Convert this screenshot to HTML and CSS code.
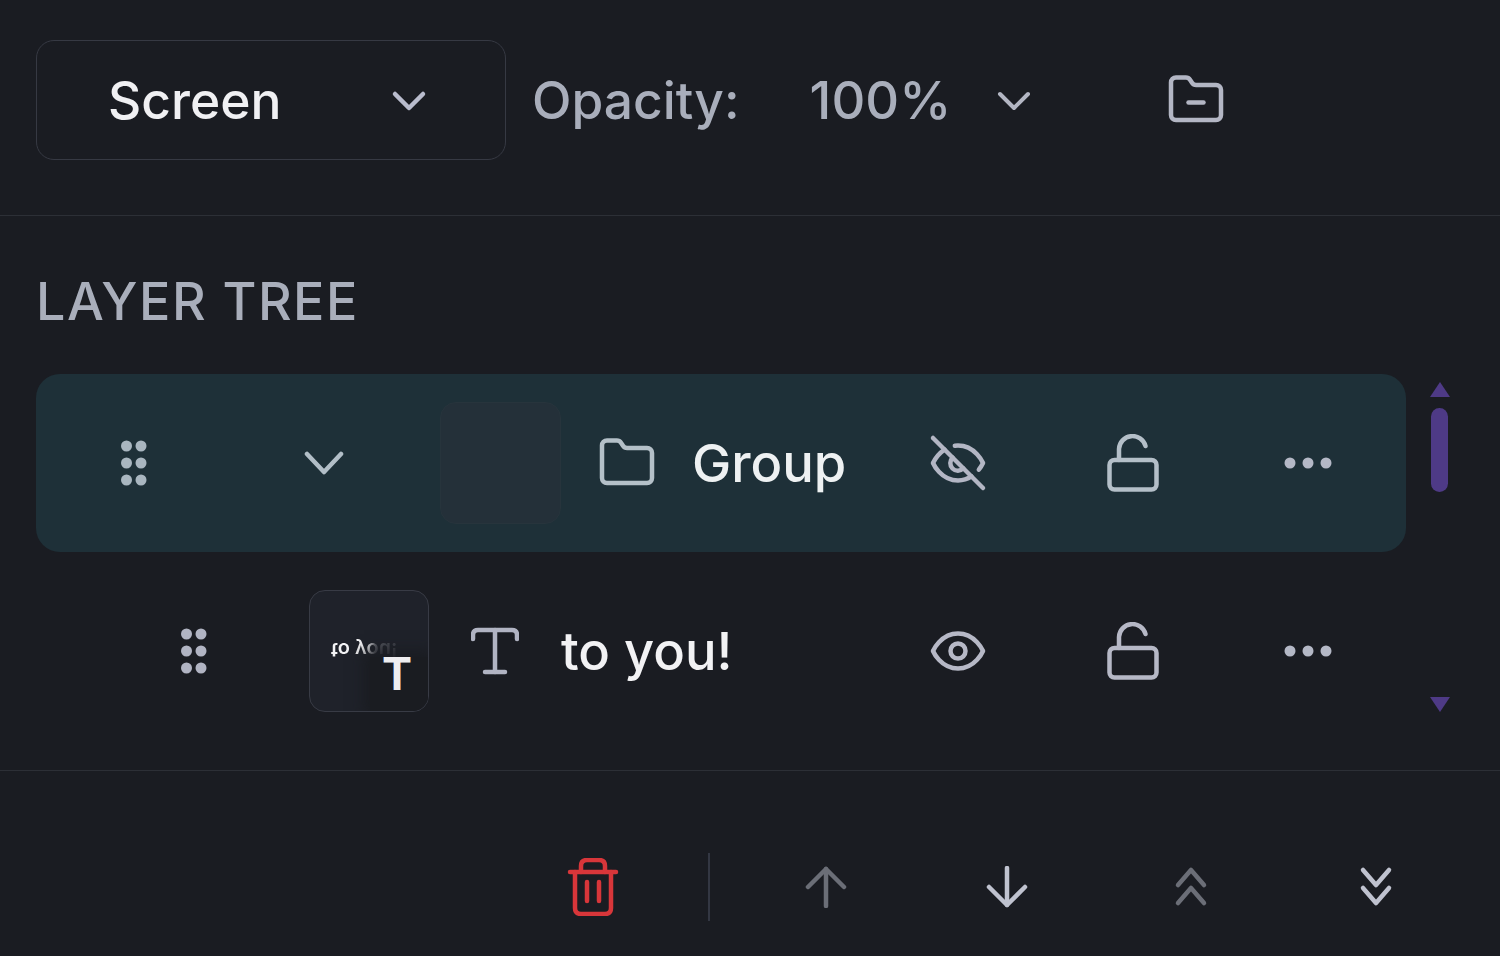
FILE: index.html
```html
<!DOCTYPE html>
<html lang="en">
<head>
<meta charset="utf-8">
<title>Layer tree</title>
<link rel="stylesheet" href="styles.css">
</head>
<body>
<main class="panel">
  <section class="toolbar">
    <div class="select">
      <span class="select-label">Screen</span>
      <svg class="chev" viewBox="0 0 36 24"><path d="M4 6l14 14L32 6"/></svg>
    </div>
    <span class="opacity-label">Opacity:</span>
    <span class="opacity-value">100%</span>
    <svg class="chev chev-opacity" viewBox="0 0 36 24"><path d="M4 6l14 14L32 6"/></svg>
    <svg class="icon icon-group-folder" viewBox="0 0 24 24"><path d="M9 13h6"/><path d="M20 20a2 2 0 0 0 2-2V8a2 2 0 0 0-2-2h-7.9a2 2 0 0 1-1.69-.9L9.6 3.9A2 2 0 0 0 7.93 3H4a2 2 0 0 0-2 2v13a2 2 0 0 0 2 2Z"/></svg>
  </section>

  <h2 class="title">LAYER TREE</h2>

  <section class="tree">
    <div class="list">
      <div class="row row-selected">
        <svg class="grip grip-group" viewBox="0 0 28 48"><circle cx="6.500" cy="7" r="5.500"/><circle cx="21" cy="7" r="5.500"/><circle cx="6.500" cy="24" r="5.500"/><circle cx="21" cy="24" r="5.500"/><circle cx="6.500" cy="41" r="5.500"/><circle cx="21" cy="41" r="5.500"/></svg>
        <svg class="row-chev" viewBox="0 0 40 26"><path d="M3 4l17 18L37 4"/></svg>
        <div class="thumb thumb-empty"></div>
        <svg class="icon folder" viewBox="0 0 24 24"><path d="M20 20a2 2 0 0 0 2-2V8a2 2 0 0 0-2-2h-7.900a2 2 0 0 1-1.690-.9L9.600 3.900A2 2 0 0 0 7.930 3H4a2 2 0 0 0-2 2v13a2 2 0 0 0 2 2Z"/></svg>
        <span class="name name-group">Group</span>
        <div class="actions">
          <span class="cell"><svg class="icon" viewBox="0 0 24 24"><path d="M9.880 9.880a3 3 0 1 0 4.240 4.240"/><path d="M10.730 5.080A10.430 10.430 0 0 1 12 5c7 0 10 7 10 7a13.160 13.160 0 0 1-1.670 2.680"/><path d="M6.610 6.610A13.526 13.526 0 0 0 2 12s3 7 10 7a9.740 9.740 0 0 0 5.390-1.610"/><path d="M2 2l20 20"/></svg></span>
          <span class="cell"><svg class="lock" viewBox="0 0 52 58"><rect x="2.500" y="26" width="47" height="29.500" rx="5"/><path d="M12 26V15a13.500 13.500 0 0 1 26.500-3"/></svg></span>
          <span class="cell"><svg class="more" viewBox="0 0 48 12"><circle cx="6" cy="6" r="5.500"/><circle cx="24" cy="6" r="5.500"/><circle cx="42" cy="6" r="5.500"/></svg></span>
        </div>
      </div>
      <div class="row row-text">
        <svg class="grip grip-text" viewBox="0 0 28 48"><circle cx="6.500" cy="7" r="5.500"/><circle cx="21" cy="7" r="5.500"/><circle cx="6.500" cy="24" r="5.500"/><circle cx="21" cy="24" r="5.500"/><circle cx="6.500" cy="41" r="5.500"/><circle cx="21" cy="41" r="5.500"/></svg>
        <div class="thumb thumb-text">
          <span class="thumb-preview">to you!</span>
          <span class="thumb-badge">T</span>
        </div>
        <svg class="type-icon" viewBox="0 0 48 48"><path d="M2 12V8q0-5 5-5h34q5 0 5 5v4"/><path d="M24 3v42"/><path d="M14 45h20"/></svg>
        <span class="name name-text">to you!</span>
        <div class="actions">
          <span class="cell"><svg class="icon" viewBox="0 0 24 24"><path d="M2 12s3-7 10-7 10 7 10 7-3 7-10 7-10-7-10-7Z"/><circle cx="12" cy="12" r="3"/></svg></span>
          <span class="cell"><svg class="lock" viewBox="0 0 52 58"><rect x="2.500" y="26" width="47" height="29.500" rx="5"/><path d="M12 26V15a13.500 13.500 0 0 1 26.500-3"/></svg></span>
          <span class="cell"><svg class="more" viewBox="0 0 48 12"><circle cx="6" cy="6" r="5.500"/><circle cx="24" cy="6" r="5.500"/><circle cx="42" cy="6" r="5.500"/></svg></span>
        </div>
      </div>
    </div>
    <div class="scrollbar">
      <span class="tri tri-up"></span>
      <span class="scroll-thumb"></span>
      <span class="tri tri-down"></span>
    </div>
  </section>

  <section class="footer">
    <svg class="trash" viewBox="0 0 52 58"><path d="M3 14h46"/><path d="M14 14V8q0-6 6-6h12q6 0 6 6v6"/><path d="M8 14v36q0 6 6 6h24q6 0 6-6V14"/><path d="M20 24v19"/><path d="M32 24v19"/></svg>
    <span class="vline"></span>
    <svg class="arrow dim arrow-up" viewBox="0 0 44 42"><path d="M22 40V3"/><path d="M4 21L22 3l18 18"/></svg>
    <svg class="arrow arrow-down" viewBox="0 0 44 42"><path d="M22 2v37"/><path d="M4 21l18 18 18-18"/></svg>
    <svg class="arrow dim arrow-top" viewBox="0 0 44 42"><path d="M9 19L22 4l13 15"/><path d="M9 37l13-15 13 15"/></svg>
    <svg class="arrow arrow-bottom" viewBox="0 0 44 42"><path d="M9 4l13 15L35 4"/><path d="M9 22l13 15 13-15"/></svg>
  </section>
</main>
</body>
</html>
```

FILE: styles.css
```css
* { box-sizing: border-box; }
html, body { margin: 0; height: 100%; }
body {
  background: #1a1c22;
  font-family: Inter, "Liberation Sans", sans-serif;
  overflow: hidden;
}
svg { display: block; flex: none; fill: none; stroke-linecap: round; stroke-linejoin: round; }

.panel { display: flex; flex-direction: column; width: 1500px; height: 956px; }

.toolbar {
  display: flex;
  flex: none;
  align-items: center;
  height: 216px;
  padding: 40px 0 55px 36px;
  border-bottom: 1px solid #2c2f36;
}
.select {
  display: flex;
  align-items: center;
  width: 470px;
  height: 120px;
  padding: 0 78px 0 71px;
  justify-content: space-between;
  border: 1px solid #363943;
  border-radius: 18px;
}
.select-label { font-size: 51.500px; font-weight: 500; color: #f0f0f3; }
.chev { width: 36px; height: 24px; stroke: #b9bccd; stroke-width: 4.500; }
.opacity-label { margin-left: 26px; font-size: 51.500px; font-weight: 500; color: #a9aebb; }
.opacity-value { margin-left: 70px; font-size: 52.500px; font-weight: 500; color: #a9aebb; }
.chev-opacity { margin-left: 45px; stroke-width: 4; stroke: #b3b6c3; }
.icon-group-folder { margin-left: 134px; }

.icon { width: 60px; height: 60px; stroke: #b3b6c4; stroke-width: 1.800; }

.title {
  flex: none;
  margin: 56px 0 42px 36px;
  font-size: 52px;
  line-height: 60px;
  font-weight: 500;
  letter-spacing: 1.500px;
  color: #a9aebb;
}

.tree {
  display: flex;
  flex: none;
  height: 397px;
  border-bottom: 1px solid #2c2f36;
  padding-left: 36px;
}
.list { width: 1370px; }
.row { display: flex; align-items: center; }
.row-selected {
  height: 178px;
  background: #1e3038;
  border-radius: 24px;
  padding-left: 84px;
}
.row-text { height: 198px; padding-left: 144px; }

.grip { width: 28px; height: 48px; }
.grip-group { fill: #a9b6c0; }
.grip-text { fill: #b1b4c3; }
.row-chev { width: 40px; height: 26px; margin-left: 156px; stroke: #b2bec7; stroke-width: 4.500; }

.thumb { flex: none; width: 121px; height: 122px; border-radius: 16px; }
.thumb-empty { margin-left: 96px; background: #243039; border: 1px solid #27343c; }
.thumb-text {
  position: relative;
  width: 120px;
  margin-left: 101px;
  overflow: hidden;
  background: #1f222a;
  border: 1px solid #383b45;
}
.thumb-preview {
  position: absolute;
  left: 21px;
  top: 45px;
  font-size: 20px;
  line-height: 28px;
  font-weight: 600;
  white-space: nowrap;
  color: transparent;
  background: linear-gradient(90deg, #f3f3f5 55%, #55575f 68%, #3c3e46 100%);
  -webkit-background-clip: text;
  background-clip: text;
  transform: scaleY(-1);
}
.thumb-badge {
  position: absolute;
  right: 0;
  bottom: 0;
  width: 58px;
  height: 54px;
  padding-left: 12px;
  font-size: 45px;
  line-height: 34px;
  font-weight: 700;
  color: #eeeef0;
  background: #1a1c21;
  box-shadow: 0 0 14px 6px #1a1c21;
}

.folder { margin-left: 36px; stroke: #b4c0c8; }
.name { font-size: 52.500px; font-weight: 500; color: #eef1f2; }
.name-group { margin-left: 35px; }
.name-text { margin-left: 42px; color: #f2f2f4; }
.type-icon { width: 48px; height: 48px; margin-left: 42px; stroke: #b1b4c3; stroke-width: 4.500; }

.actions {
  display: flex;
  align-items: center;
  gap: 115px;
  margin-left: auto;
  padding-right: 68px;
}
.cell { display: flex; align-items: center; justify-content: center; width: 60px; }
.lock { width: 52px; height: 58px; stroke: #b4bfc8; stroke-width: 4.500; }
.row-text .lock, .row-text .icon { stroke: #b6b8c6; }
.more { width: 48px; height: 12px; fill: #b4b8c6; }

.scrollbar { position: relative; display: flex; flex-direction: column; align-items: center; width: 19px; margin-left: 24px; padding-top: 8px; }
.tri { width: 0; height: 0; border-left: 10px solid transparent; border-right: 10px solid transparent; }
.tri-up { border-bottom: 15px solid #4e3a86; }
.tri-down { position: absolute; top: 323px; border-top: 15px solid #4e3a86; }
.scroll-thumb { width: 17px; height: 84px; margin-top: 11px; border-radius: 9px; background: #4e3a86; }

.footer {
  display: flex;
  flex: none;
  align-items: center;
  height: 185px;
  padding: 46px 0 0 567px;
}
.trash { width: 52px; height: 58px; stroke: #d8363a; stroke-width: 4.500; }
.vline { width: 2px; height: 68px; margin-left: 89px; background: #333743; }
.arrow { width: 44px; height: 42px; stroke: #bfc2cf; stroke-width: 4.500; }
.arrow-up { margin-left: 94px; }
.arrow-down { margin-left: 137px; }
.arrow-top { margin-left: 140px; }
.arrow-bottom { margin-left: 141px; }
.dim { stroke: #6b6e77; }
```
